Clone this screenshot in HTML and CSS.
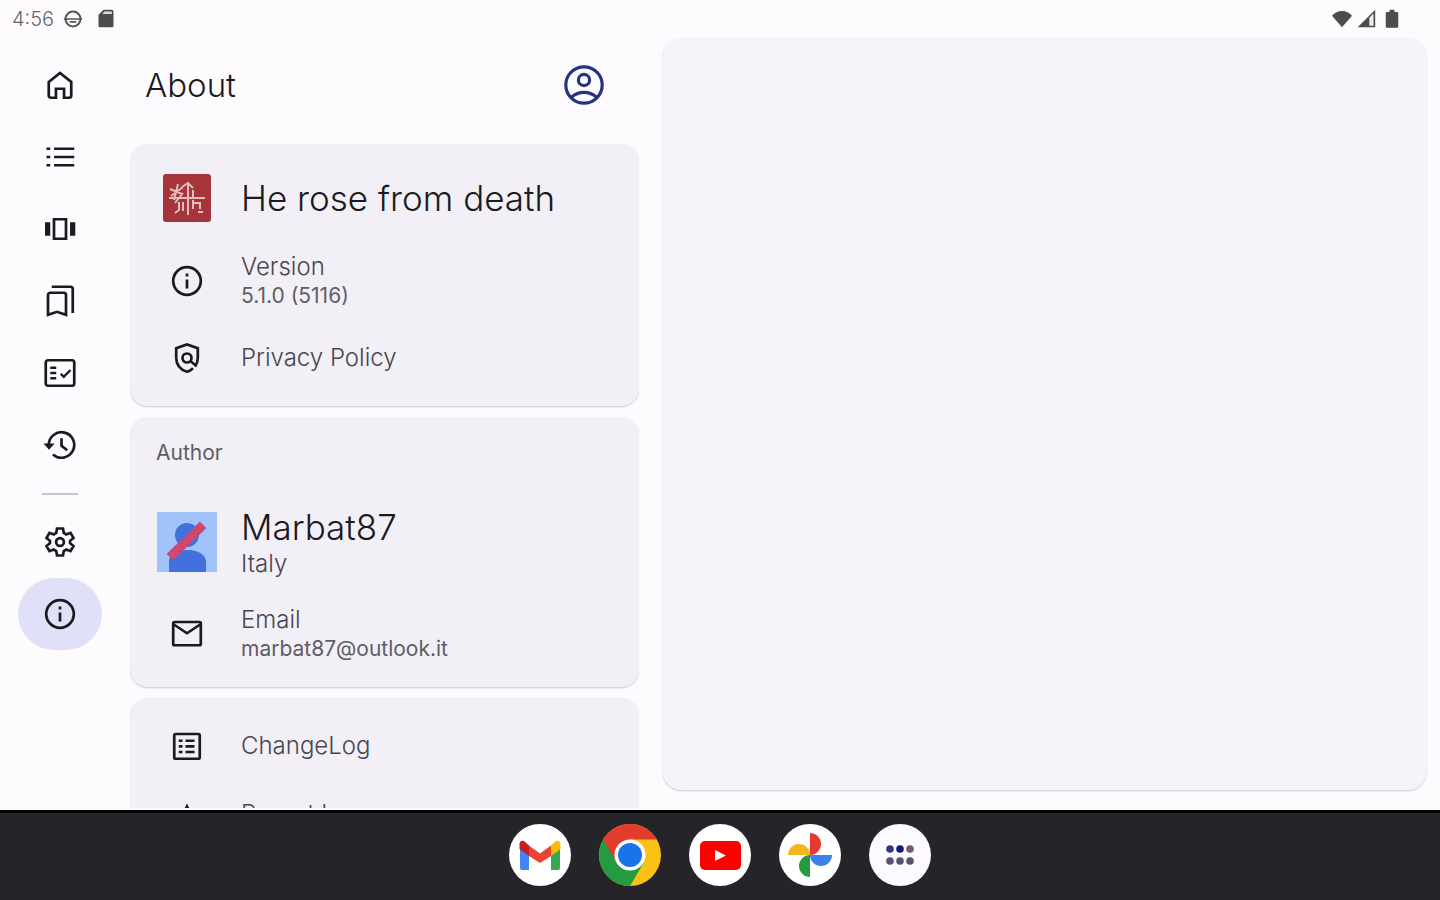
FILE: index.html
```html
<!doctype html>
<html lang="en">
  <head>
    <meta charset="UTF-8" />
    <meta name="viewport" content="width=device-width, initial-scale=1" />
    <title>About</title>
    <link rel="stylesheet" href="styles.css">
  </head>
  <body>
    <header class="status-bar">
      <span class="time">4:56</span>
      <svg class="status-icon" viewBox="0 0 24 24"><circle cx="12" cy="12" r="9" fill="none" stroke="#555" stroke-width="2.4"/><path d="M1 12h22M8 15.500h8" stroke="#555" stroke-width="2"/></svg>
      <svg class="status-icon sd" viewBox="0 0 24 24"><path d="M9 1h10a2 2 0 0 1 2 2v17a2 2 0 0 1-2 2H5a2 2 0 0 1-2-2V7z" fill="#4c4c4c"/><path d="M10 3h9v3H7.500z" fill="#ddd"/></svg>
      <span class="spacer"></span>
      <svg class="status-icon" viewBox="0 0 24 24"><path d="M12 22 0 8C3 4.500 7.500 2.500 12 2.500S21 4.500 24 8z" fill="#4c4c4c"/></svg>
      <svg class="status-icon" viewBox="0 0 24 24"><path d="M23 1v21H2z" fill="#4c4c4c"/><path d="M16 10.500l5-5v14.500h-5z" fill="#eee"/></svg>
      <svg class="status-icon battery" viewBox="0 0 24 24"><path d="M9 1h6v2.500h3A1.500 1.500 0 0 1 19.500 5v16a1.500 1.500 0 0 1-1.500 1.500H6A1.500 1.500 0 0 1 4.500 21V5A1.500 1.500 0 0 1 6 3.500h3z" fill="#4c4c4c"/></svg>
    </header>

    <main class="app">
      <nav class="rail">
        <a href="#home" aria-label="Home"><svg class="icon" viewBox="0 0 24 24"><path d="M4.500 10 12 4l7.500 6v9a1.500 1.500 0 0 1-1.500 1.500h-3.300v-6H9.300v6H6A1.500 1.500 0 0 1 4.500 19z"/></svg></a>
        <a href="#list" aria-label="List"><svg class="icon" viewBox="0 0 24 24"><path d="M8 6.500h13.500M8 12h13.500M8 17.500h13.500M3 6.500h2.500M3 12h2.500M3 17.500h2.500"/></svg></a>
        <a href="#carousel" aria-label="Carousel"><svg class="icon" viewBox="0 0 24 24"><path d="M8 5.500h8v13H8z"/><path d="M2 7.500h3.500v9H2zM18.700 7.500h3.500v9h-3.500z" class="solid"/></svg></a>
        <a href="#bookmarks" aria-label="Bookmarks"><svg class="icon" viewBox="0 0 24 24"><path d="M6.500 2.500h12.500a1.500 1.500 0 0 1 1.500 1.500v16M4 21.200V8a1.500 1.500 0 0 1 1.500-1.500h9A1.500 1.500 0 0 1 16 8v13.200l-6-2z"/></svg></a>
        <a href="#checks" aria-label="Checklist"><svg class="icon" viewBox="0 0 24 24"><rect x="2.500" y="3.500" width="19" height="17" rx="1.500"/><path d="M5.500 8.500h4M5.500 12h4M5.500 15.500h4M12.500 12.500l2 2 4.500-4.500" stroke-width="1.600"/></svg></a>
        <a href="#history" aria-label="History"><svg class="icon" viewBox="0 0 24 24"><path d="M4.500 12a8.500 8.500 0 1 1 2.800 6.300M13 7.500v5l3.800 3"/><path d="M1 11h7.400l-3.700 4.200z" class="solid"/></svg></a>
        <hr>
        <a href="#settings" aria-label="Settings"><svg class="icon" viewBox="0 0 24 24"><path d="M10 3h4l.5 3 1.700 1 2.800-1.100 2 3.400-2.300 1.900v1.600l2.300 1.900-2 3.400-2.800-1.100-1.700 1-.5 3h-4l-.5-3-1.700-1L5 18.100l-2-3.400 2.300-1.900v-1.600L3 9.300l2-3.400L7.800 7l1.700-1z"/><circle cx="12" cy="12" r="2.600"/></svg></a>
        <a href="#about" class="active" aria-label="About"><svg class="icon" viewBox="0 0 24 24"><circle cx="12" cy="12" r="9.200"/><path d="M12 11v6M12 7v2"/></svg></a>
      </nav>

      <section class="list-pane">
        <div class="toolbar">
          <h1>About</h1>
          <button type="button" class="account" aria-label="Account"><svg viewBox="0 0 24 24"><circle cx="12" cy="12" r="9.100"/><circle cx="12" cy="9.500" r="2.800"/><path d="M5.600 18.200c3.800-3.300 9-3.300 12.800 0"/></svg></button>
        </div>

        <div class="card">
          <div class="row row-app">
            <svg class="app-logo" viewBox="0 0 48 48"><rect width="48" height="48" rx="3" fill="#a5353a"/><g fill="none" stroke="#e3bcbc" stroke-width="2"><path d="M25 8v33M6 24h36M7 15l12 5M15 10l-4 16M20 13 8 22M12 29l8-10M19 13l6-4 5 5M16 28v8l-4 3M20 28v9M30 16v8M30 26v9M31 29h6v6M35 38h5"/></g></svg>
            <h2>He rose from death</h2>
          </div>
          <div class="row">
            <svg class="icon" viewBox="0 0 24 24"><circle cx="12" cy="12" r="9.200"/><path d="M12 11v6M12 7v2"/></svg>
            <div class="text">
              <p class="title">Version</p>
              <p class="sub">5.1.0 (5116)</p>
            </div>
          </div>
          <a class="row row-single" href="#privacy">
            <svg class="icon" viewBox="0 0 24 24"><path d="M16 18.800c-1 1-2.400 1.900-4 2.400-4.500-1.500-7.200-4.700-7.200-9.400V5.500L12 3l7.200 2.500v6.300c0 2-.5 3.800-1.400 5.200l-3.300-2.800"/><circle cx="12" cy="12" r="3"/></svg>
            <span class="title">Privacy Policy</span>
          </a>
        </div>

        <div class="card card-author">
          <h3>Author</h3>
          <div class="row row-author">
            <svg class="avatar" viewBox="0 0 60 60"><path d="M0 0h60v60H0z" fill="#a1c2fa"/><circle cx="30" cy="23" r="12" fill="#4270dc"/><path d="M12 60V49c0-7 8-11 19-11s18 5 18 12v10z" fill="#4270dc"/><path d="M13 45 46 13" stroke="#a35a97" stroke-width="9"/><path d="M13 45 46 13" stroke="#f0344a" stroke-width="9" stroke-dasharray="2 3"/><path d="M13 45 46 13" stroke="#e04560" stroke-width="3"/></svg>
            <div class="text">
              <h2>Marbat87</h2>
              <p class="title">Italy</p>
            </div>
          </div>
          <a class="row" href="mailto:marbat87@outlook.it">
            <svg class="icon" viewBox="0 0 24 24"><rect x="2.800" y="4" width="18.400" height="15.500" rx="1"/><path d="m3 5.500 9 6 9-6"/></svg>
            <div class="text">
              <p class="title">Email</p>
              <p class="sub">marbat87@outlook.it</p>
            </div>
          </a>
        </div>

        <div class="card">
          <a class="row row-single" href="#changelog">
            <svg class="icon" viewBox="0 0 24 24"><rect x="3.500" y="4" width="17" height="16.500" rx="1"/><path d="M6.500 8.500h2.500M11 8.500h6M6.500 12.200h2.500M11 12.200h6M6.500 16h2.500M11 16h6"/></svg>
            <span class="title">ChangeLog</span>
          </a>
          <a class="row row-report" href="#report">
            <svg class="icon" viewBox="0 0 24 24"><path d="m12 7 2 4 5 .5-3.500 3.500 1 5-4.500-2.500L7.500 20l1-5L5 11.500l5-.5z"/></svg>
            <span class="title">Report bug</span>
          </a>
        </div>
      </section>

      <section class="detail-pane"></section>
    </main>

    <footer class="taskbar">
      <button type="button" aria-label="Gmail">
        <svg viewBox="0 0 62 62"><circle cx="31" cy="31" r="31" fill="#fff"/><path d="M11 22v22q0 2 2 2h7V27z" fill="#4285f4"/><path d="M51 22v22q0 2-2 2h-7V27z" fill="#34a853"/><path d="M42 21.500 47 17q4-1 4.500 3v5L42 32z" fill="#fbbc04"/><path d="M20 32V21.500l11 8 11-8V32L31 39z" fill="#ea4335"/><path d="M20 21.500 15 17q-4-1-4.500 3v5L20 32z" fill="#c5221f"/></svg>
      </button>
      <button type="button" aria-label="Chrome">
        <svg viewBox="0 0 62 62"><circle cx="31" cy="31" r="31" fill="#fbc116"/><path d="M31 31 44.500 39 31 62A31 31 0 0 1 4.200 15.500z" fill="#249a41"/><path d="M4.200 15.500A31 31 0 0 1 57.800 15.500H31L17.600 38.700z" fill="#e33b2e"/><circle cx="31" cy="31" r="15.500" fill="#fff"/><circle cx="31" cy="31" r="12" fill="#1a73e8"/></svg>
      </button>
      <button type="button" aria-label="YouTube">
        <svg viewBox="0 0 62 62"><circle cx="31" cy="31" r="31" fill="#fff"/><rect x="11" y="17" width="41" height="29" rx="5" fill="#f00"/><path d="m26 26 11 5.500L26 37z" fill="#fff"/></svg>
      </button>
      <button type="button" aria-label="Photos">
        <svg viewBox="0 0 62 62"><circle cx="31" cy="31" r="31" fill="#fff"/><path d="M31 9a11 11 0 0 1 0 22z" fill="#e33b2e"/><path d="M53 31a11 11 0 0 1-22 0z" fill="#3b80ee"/><path d="M31 53a11 11 0 0 1 0-22z" fill="#249a41"/><path d="M9 31a11 11 0 0 1 22 0z" fill="#f6b51b"/></svg>
      </button>
      <button type="button" aria-label="All apps">
        <svg viewBox="0 0 62 62"><circle cx="31" cy="31" r="31" fill="#fcf9ff"/><g fill="#565170"><circle cx="21" cy="25" r="3.800" fill="#2d3a80"/><circle cx="31" cy="25" r="3.800" fill="#101878"/><circle cx="41" cy="25" r="3.800" fill="#77566e"/><circle cx="21" cy="37" r="3.800"/><circle cx="31" cy="37" r="3.800"/><circle cx="41" cy="37" r="3.800"/></g></svg>
      </button>
    </footer>
  </body>
</html>
```

FILE: styles.css
```css
* {
  box-sizing: border-box;
}
body {
  margin: 0;
  height: 100vh;
  display: flex;
  flex-direction: column;
  font-family: Inter, Roboto, sans-serif;
  background: #fefbff;
  color: #1b1b1f;
}
h1,
h2,
h3,
p {
  margin: 0;
  font-weight: 300;
}
a {
  color: inherit;
  text-decoration: none;
}
button {
  padding: 0;
  border: none;
  background: none;
  cursor: pointer;
}
svg {
  display: block;
  flex: none;
}

/* status bar */
.status-bar {
  display: flex;
  align-items: center;
  flex: none;
  gap: 4px;
  height: 38px;
  padding: 0 38px 0 12px;
}
.time {
  margin-right: 5px;
  font-size: 20px;
  font-weight: 300;
  color: #666;
}
.status-icon {
  width: 20px;
  height: 20px;
}
.sd {
  margin-left: 9px;
}
.battery {
  margin-left: 2px;
}
.spacer {
  flex: 1;
}

/* main area */
.app {
  flex: 1;
  min-height: 0;
  display: grid;
  grid-template-columns: 106px 2fr 3fr;
  grid-template-rows: 100%;
  column-gap: 24px;
  padding-right: 14px;
}
.rail {
  display: flex;
  flex-direction: column;
  align-items: center;
  margin-right: -14px;
  padding-top: 11px;
}
.rail a {
  display: flex;
  align-items: center;
  justify-content: center;
  width: 84px;
  height: 72px;
  border-radius: 36px;
}
.rail .active {
  background: #e0e1f9;
}
.rail hr {
  width: 36px;
  height: 2px;
  margin: 12px 0 11px;
  border: none;
  background: #c8c5d0;
}
.icon {
  width: 36px;
  height: 36px;
  fill: none;
  stroke: #1b1b1f;
  stroke-width: 1.800;
}
.icon .solid {
  fill: #1b1b1f;
  stroke: none;
}

/* list pane */
.list-pane {
  margin-bottom: 2px;
  overflow: hidden;
}
.toolbar {
  display: flex;
  align-items: center;
  justify-content: space-between;
  height: 94px;
  margin-bottom: 12px;
  padding: 0 31px 0 15px;
}
.toolbar h1 {
  font-size: 33px;
}
.account svg {
  width: 48px;
  height: 48px;
  fill: none;
  stroke: #27337f;
  stroke-width: 1.600;
}
.card {
  margin-bottom: 11px;
  padding: 10px 26px;
  border-radius: 18px;
  background: #f2eff6;
  box-shadow: 0 1px 2px rgba(0, 0, 0, 0.2);
}
.card-author {
  padding-bottom: 14px;
}
.card h3 {
  height: 52px;
  margin-bottom: 10px;
  font-size: 21px;
  font-weight: 400;
  line-height: 52px;
  color: #5e5d66;
}
.row {
  display: grid;
  grid-template-columns: 61px 1fr;
  column-gap: 24px;
  align-items: center;
  height: 78px;
}
.row > svg {
  justify-self: center;
}
.row-app {
  height: 88px;
}
.row-author {
  height: 106px;
}
.row-single {
  height: 76px;
}
.row-report {
  height: 60px;
}
.app-logo {
  width: 48px;
  height: 48px;
}
.avatar {
  width: 60px;
  height: 60px;
}
.row h2 {
  font-size: 35px;
  line-height: 44px;
}
.title {
  font-size: 24px;
  font-weight: 300;
  line-height: 30px;
  color: #46464f;
}
.sub {
  font-size: 21px;
  font-weight: 400;
  line-height: 28px;
  color: #5e5d66;
}

/* detail pane */
.detail-pane {
  margin-bottom: 20px;
  border-radius: 18px;
  background: #f6f3fa;
  box-shadow: 0 1px 2px rgba(0, 0, 0, 0.2);
}

/* taskbar */
.taskbar {
  display: flex;
  align-items: center;
  justify-content: center;
  flex: none;
  gap: 28px;
  height: 90px;
  background: #252429;
  box-shadow: inset 0 3px #050507;
}
.taskbar svg {
  width: 62px;
  height: 62px;
}
```
